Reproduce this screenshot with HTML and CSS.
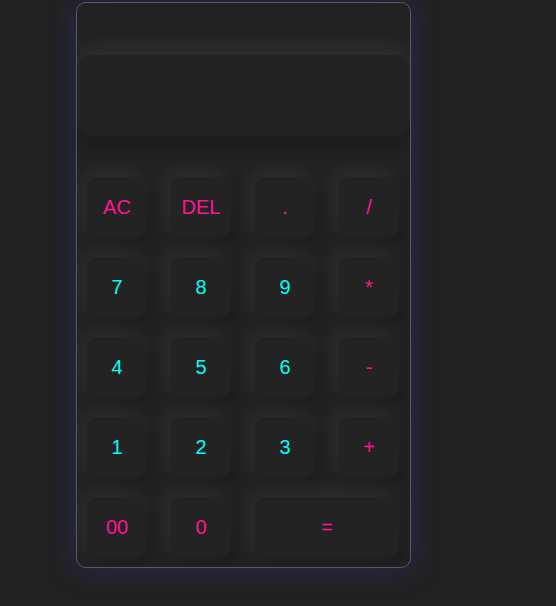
FILE: index.html
```html
<!DOCTYPE html>
<html>
<head>
<meta charset="utf-8">
<link rel="stylesheet" href="styles.css">
</head>
<body>
<div class="calc">
  <div class="display"></div>
  <div class="keys">
    <button class="key op">AC</button>
    <button class="key op">DEL</button>
    <button class="key op">.</button>
    <button class="key op">/</button>
    <button class="key num">7</button>
    <button class="key num">8</button>
    <button class="key num">9</button>
    <button class="key op">*</button>
    <button class="key num">4</button>
    <button class="key num">5</button>
    <button class="key num">6</button>
    <button class="key op">-</button>
    <button class="key num">1</button>
    <button class="key num">2</button>
    <button class="key num">3</button>
    <button class="key op">+</button>
    <button class="key op">00</button>
    <button class="key op">0</button>
    <button class="key op wide">=</button>
  </div>
</div>
</body>
</html>
```
FILE: styles.css
```css
html, body {
  margin: 0;
  padding: 0;
  background: #222222;
  height: 100%;
}
body {
  padding-top: 2px;
  padding-left: 76px;
  font-family: "Liberation Sans", Arial, sans-serif;
}
.calc {
  width: 333px;
  border: 1px solid #5a5a5e;
  border-radius: 10px;
  background: #222222;
  box-shadow: 0 0 28px rgba(45, 45, 120, 0.6);
  padding: 52px 0 10px;
  overflow: hidden;
}
.display {
  height: 81px;
  margin: 0 1px 41px 0;
  border-radius: 15px;
  background: #232323;
  box-shadow: 0 -8px 20px rgba(255, 255, 255, 0.07), 0 8px 15px rgba(0, 0, 0, 0.25);
}
.keys {
  display: grid;
  grid-template-columns: repeat(4, 60px);
  grid-auto-rows: 60px;
  column-gap: 24px;
  row-gap: 20px;
  padding: 0 10px;
}
.key {
  border: none;
  border-radius: 10px;
  background: #232323;
  font-family: "Liberation Sans", Arial, sans-serif;
  font-size: 20px;
  padding: 0;
  box-shadow: -5px -5px 20px rgba(255, 255, 255, 0.07), 5px 5px 15px rgba(0, 0, 0, 0.22);
}
.op { color: #ff1493; }
.num { color: #00ffff; }
.wide { grid-column: span 2; }
```
